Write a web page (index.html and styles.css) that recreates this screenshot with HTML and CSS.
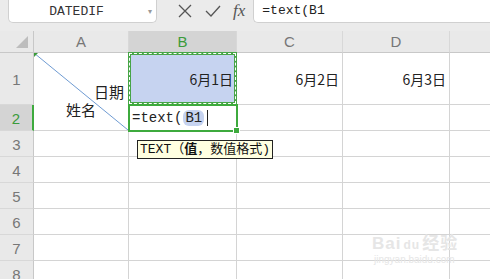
FILE: index.html
```html
<!DOCTYPE html>
<html lang="zh">
<head>
  <meta charset="UTF-8">
  <title>表格 - TEXT 函数</title>
  <link rel="stylesheet" href="styles.css">
</head>
<body>

  <div class="toolbar">
    <div class="namebox">
      <span class="name">DATEDIF</span>
      <span class="drop">&#9662;</span>
    </div>
    <div class="actions">
      <svg class="ico" width="14" height="14" viewBox="0 0 14 14"><path d="M1 1 L13 13 M13 1 L1 13" stroke="#555" stroke-width="1.3" fill="none"/></svg>
      <svg class="ico" width="16" height="14" viewBox="0 0 16 14"><path d="M1 7 L6 12 L15 2" stroke="#555" stroke-width="1.3" fill="none"/></svg>
      <span class="fx">fx</span>
    </div>
    <div class="formula">=text(B1</div>
  </div>

  <div class="sheet">
    <div class="corner"><span class="tri"></span></div>
    <div class="colhead">A</div>
    <div class="colhead sel">B</div>
    <div class="colhead">C</div>
    <div class="colhead">D</div>
    <div class="colhead last"></div>

    <div class="rowhead tall">1</div>
    <div class="cell merged">
      <svg class="diag" viewBox="0 0 94 78" preserveAspectRatio="none"><line x1="0" y1="0" x2="94" y2="78" stroke="#6e9ad2" stroke-width="1"/></svg>
      <span class="mark"></span>
      <span class="lbl-date">日期</span>
      <span class="lbl-name">姓名</span>
    </div>
    <div class="cell num ref">6月1日</div>
    <div class="cell num">6月2日</div>
    <div class="cell num">6月3日</div>
    <div class="cell last"></div>

    <div class="rowhead sel">2</div>
    <div class="cell edit">=text(<span class="pill">B1</span><span class="caret"></span></div>
    <div class="cell"></div>
    <div class="cell"></div>
    <div class="cell last"></div>

    <div class="rowhead">3</div>
    <div class="cell"></div><div class="cell"></div><div class="cell"></div><div class="cell"></div><div class="cell last"></div>
    <div class="rowhead">4</div>
    <div class="cell"></div><div class="cell"></div><div class="cell"></div><div class="cell"></div><div class="cell last"></div>
    <div class="rowhead">5</div>
    <div class="cell"></div><div class="cell"></div><div class="cell"></div><div class="cell"></div><div class="cell last"></div>
    <div class="rowhead">6</div>
    <div class="cell"></div><div class="cell"></div><div class="cell"></div><div class="cell"></div><div class="cell last"></div>
    <div class="rowhead">7</div>
    <div class="cell"></div><div class="cell"></div><div class="cell"></div><div class="cell"></div><div class="cell last"></div>
    <div class="rowhead">8</div>
    <div class="cell"></div><div class="cell"></div><div class="cell"></div><div class="cell"></div><div class="cell last"></div>

    <!-- 选区叠层 -->
    <div class="ants"></div>
    <div class="active"><span class="handle"></span></div>
    <div class="tip">TEXT（<b>值</b>，数值格式)</div>
    <div class="wm"><span class="wm-big">Bai<span class="paw">du</span>经验</span><span class="wm-small">jingyan.baidu.com</span></div>
  </div>

</body>
</html>
```

FILE: styles.css
```css
body {
  margin: 0;
  width: 490px;
  height: 279px;
  overflow: hidden;
  background: #ebebeb;
  font-family: "Liberation Sans", "Noto Sans CJK SC", sans-serif;
  color: #222;
}

.toolbar {
  height: 31px;
  display: flex;
  align-items: flex-start;
}

.namebox {
  box-sizing: border-box;
  width: 149px;
  height: 23px;
  margin-left: 8px;
  background: #fff;
  border: 1px solid #d0d0d0;
  border-top: none;
  border-radius: 0 0 5px 5px;
  display: flex;
  align-items: center;
  position: relative;
}

.name {
  flex: 1;
  text-align: center;
  font-family: "Liberation Mono", monospace;
  font-size: 13px;
  color: #333;
  padding-right: 4px;
}

.drop {
  font-size: 8px;
  color: #999;
  margin-right: 4px;
}

.actions {
  display: flex;
  align-items: center;
  height: 22px;
  margin-left: 21px;
  gap: 13px;
}

.fx {
  font-family: "Liberation Serif", serif;
  font-style: italic;
  font-size: 17px;
  color: #555;
  margin-left: -1px;
}

.formula {
  box-sizing: border-box;
  flex: 1;
  height: 23px;
  margin-left: 8px;
  background: #fff;
  border-left: 1px solid #d0d0d0;
  border-bottom: 1px solid #d0d0d0;
  border-radius: 0 0 0 5px;
  padding-left: 8px;
  font-family: "Liberation Mono", monospace;
  font-size: 13px;
  line-height: 22px;
  color: #222;
}

.sheet {
  position: relative;
  display: grid;
  grid-template-columns: 34px 95px 108px 106px 107px 1fr;
  grid-template-rows: 22px 52px repeat(7, 26px);
  background: #fff;
}

.corner, .colhead, .rowhead {
  background: #e9e9e9;
  color: #777;
  font-size: 15px;
  display: flex;
  align-items: center;
  justify-content: center;
}

.corner {
  border-right: 1px solid #c8c8c8;
  border-bottom: 1px solid #c8c8c8;
  position: relative;
}

.tri {
  position: absolute;
  right: 5px;
  bottom: 4px;
  width: 0;
  height: 0;
  border-left: 12px solid transparent;
  border-bottom: 12px solid #bdbdbd;
}

.colhead {
  border-right: 1px solid #d8d8d8;
  border-bottom: 1px solid #c8c8c8;
}

.colhead.sel {
  background: #d4d4d4;
  color: #3b9b3b;
}

.colhead.last, .cell.last {
  border-right: none;
}

.rowhead {
  border-right: 1px solid #c8c8c8;
  border-bottom: 1px solid #d8d8d8;
  padding-top: 2px;
  box-sizing: border-box;
}

.rowhead.sel {
  background: #d4d4d4;
  color: #3b9b3b;
  border-right: 2px solid #3daa3d;
}

.cell {
  border-right: 1px solid #d4d4d4;
  border-bottom: 1px solid #d4d4d4;
  font-family: "Noto Sans CJK SC", sans-serif;
  font-size: 14px;
}

.num {
  display: flex;
  align-items: center;
  justify-content: flex-end;
  padding-right: 3px;
  padding-top: 1px;
}

.ref {
  background: #c6d3f0;
}

.merged {
  grid-row: span 2;
  position: relative;
}

.diag {
  position: absolute;
  left: 0;
  top: 0;
  width: 100%;
  height: 100%;
}

.mark {
  position: absolute;
  left: 0;
  top: 0;
  border-top: 4px solid #3a9a3a;
  border-right: 4px solid transparent;
}

.lbl-date {
  position: absolute;
  left: 60px;
  top: 28px;
  font-size: 15px;
}

.lbl-name {
  position: absolute;
  left: 32px;
  top: 46px;
  font-size: 15px;
}

.edit {
  display: flex;
  align-items: center;
  padding-left: 3px;
  font-family: "Liberation Mono", monospace;
  font-size: 14px;
}

.pill {
  background: #c6d3f0;
  border-radius: 6px;
  padding: 0 2px;
  margin-left: 1px;
}

.caret {
  display: inline-block;
  width: 1px;
  height: 16px;
  background: #222;
  margin-left: 3px;
}

.ants {
  position: absolute;
  left: 128px;
  top: 21px;
  width: 109px;
  height: 53px;
  box-sizing: border-box;
  border: 3px solid #47a547;
}

.ants::after {
  content: "";
  position: absolute;
  left: -2px;
  top: -2px;
  right: -2px;
  bottom: -2px;
  border: 1px dashed #fff;
}

.active {
  position: absolute;
  left: 128px;
  top: 73px;
  width: 110px;
  height: 28px;
  box-sizing: border-box;
  border: 2px solid #3daa3d;
}

.handle {
  position: absolute;
  right: -4px;
  bottom: -4px;
  width: 5px;
  height: 5px;
  background: #3daa3d;
  border: 1px solid #fff;
}

.tip {
  position: absolute;
  left: 137px;
  top: 109px;
  height: 17px;
  padding: 0 2px;
  background: #ffffe1;
  border: 1px solid #222;
  font-family: "Liberation Mono", "Noto Sans CJK SC", monospace;
  font-size: 13px;
  line-height: 17px;
  white-space: nowrap;
  color: #111;
}

.wm {
  position: absolute;
  left: 372px;
  top: 198px;
  display: flex;
  flex-direction: column;
  align-items: flex-start;
  color: #e6e6e6;
  pointer-events: none;
}

.wm-big {
  font-size: 17px;
  font-weight: bold;
  letter-spacing: 1px;
}

.paw {
  font-size: 12px;
  margin: 0 2px;
}

.wm-small {
  font-size: 10px;
  margin-left: 2px;
}
```
